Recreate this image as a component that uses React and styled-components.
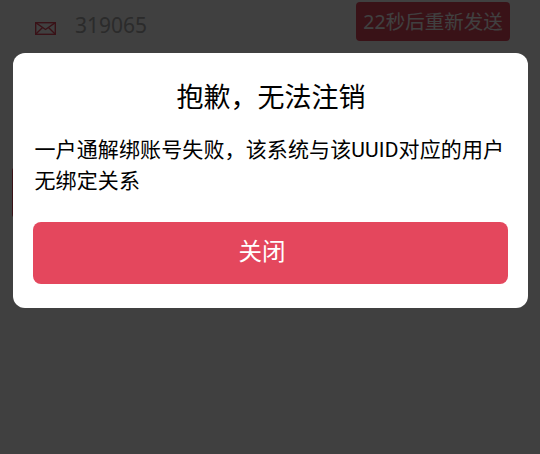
import React from "react";
import styled, { createGlobalStyle } from "styled-components";

const GlobalStyle = createGlobalStyle`
  html, body {
    margin: 0;
    padding: 0;
    background: #fff;
  }
  body {
    font-family: "Noto Sans", "Noto Sans CJK SC", sans-serif;
  }
`;

const Page = styled.div`
  position: relative;
  width: 540px;
  height: 454px;
  overflow: hidden;
  background: #fff;
`;

const Form = styled.div`
  display: flex;
  flex-direction: column;
  padding: 2px 30px 0 12px;
`;

const CodeRow = styled.div`
  display: flex;
  align-items: center;
  height: 39px;
  padding-left: 23px;
`;

const MailIcon = styled.svg`
  width: 21px;
  height: 13px;
  margin-top: 13px;
  flex: none;
`;

const CodeValue = styled.span`
  margin-left: 19px;
  margin-top: 7px;
  font-size: 21px;
  color: #aaa;
`;

const ResendButton = styled.div`
  margin-left: auto;
  width: 154px;
  height: 39px;
  box-sizing: border-box;
  padding-bottom: 3px;
  display: flex;
  align-items: center;
  justify-content: center;
  border-radius: 4px;
  background: #e4475d;
  color: #fff;
  font-size: 19.5px;
`;

const SubmitButton = styled.div`
  margin-top: 126px;
  height: 51px;
  width: 100%;
  border-radius: 4px;
  background: #e4475d;
`;

const Overlay = styled.div`
  position: absolute;
  inset: 0;
  background: rgba(0, 0, 0, 0.75);
  display: flex;
  justify-content: center;
  align-items: flex-start;
  padding-top: 53px;
`;

const Dialog = styled.div`
  width: 515px;
  height: 255px;
  box-sizing: border-box;
  background: #fff;
  border-radius: 12px;
  padding: 0 20px;
  display: flex;
  flex-direction: column;
`;

const Title = styled.div`
  margin-top: 26px;
  padding-left: 2px;
  height: 36px;
  line-height: 36px;
  text-align: center;
  font-size: 27px;
  color: #000;
`;

const Message = styled.div`
  margin-top: 20px;
  padding-left: 2px;
  height: 61px;
  font-family: "Roboto", "Noto Sans CJK SC", sans-serif;
  font-size: 21px;
  letter-spacing: 0.125px;
  line-height: 31px;
  color: #000;
`;

const CloseButton = styled.div`
  margin-top: 26px;
  height: 62px;
  box-sizing: border-box;
  border-radius: 8px;
  background: #e4475d;
  color: #fff;
  font-size: 23.5px;
  padding: 0 16px 6px 0;
  display: flex;
  align-items: center;
  justify-content: center;
`;

const App = () => (
  <Page>
    <GlobalStyle />
    <Form>
      <CodeRow>
        <MailIcon viewBox="0 0 21 13" fill="none" stroke="#e4475d" strokeWidth="1.4">
          <rect x="0.7" y="0.7" width="19.6" height="11.6" />
          <path d="M0.7 0.7 L10.5 7.5 L20.3 0.7 M0.7 12.3 L7.5 5.5 M20.3 12.3 L13.5 5.5" />
        </MailIcon>
        <CodeValue>319065</CodeValue>
        <ResendButton>22秒后重新发送</ResendButton>
      </CodeRow>
      <SubmitButton />
    </Form>
    <Overlay>
      <Dialog>
        <Title>抱歉，无法注销</Title>
        <Message>一户通解绑账号失败，该系统与该UUID对应的用户无绑定关系</Message>
        <CloseButton>关闭</CloseButton>
      </Dialog>
    </Overlay>
  </Page>
);

export default App;
